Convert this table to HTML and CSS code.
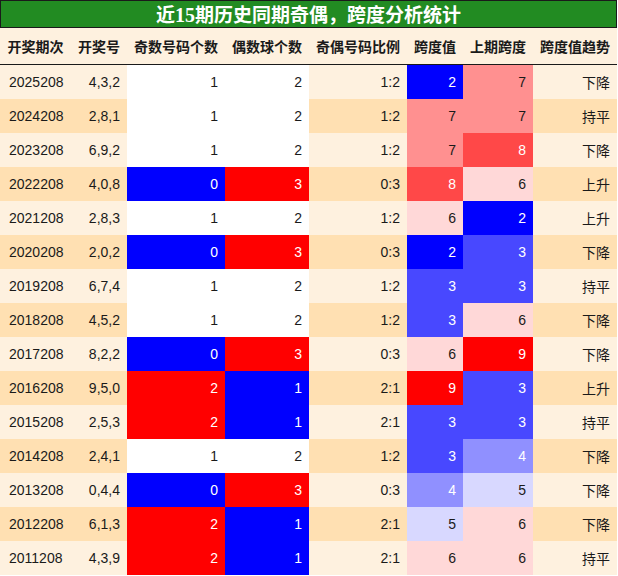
FILE: index.html
```html
<!DOCTYPE html>
<html lang="zh">
<head>
<meta charset="utf-8">
<link rel="stylesheet" href="styles.css">
</head>
<body>
<div class="sheet">
  <div class="title">近<span class="num">15</span>期历史同期奇偶，跨度分析统计</div>
  <div class="row head">
    <div class="c">开奖期次</div><div class="c">开奖号</div><div class="c">奇数号码个数</div><div class="c">偶数球个数</div><div class="c">奇偶号码比例</div><div class="c">跨度值</div><div class="c">上期跨度</div><div class="c">跨度值趋势</div>
  </div>
  <div class="row light"><div class="c">2025208</div><div class="c">4,3,2</div><div class="c w">1</div><div class="c w">2</div><div class="c">1:2</div><div class="c s2">2</div><div class="c s7">7</div><div class="c">下降</div></div>
  <div class="row dark"><div class="c">2024208</div><div class="c">2,8,1</div><div class="c w">1</div><div class="c w">2</div><div class="c">1:2</div><div class="c s7">7</div><div class="c s7">7</div><div class="c">持平</div></div>
  <div class="row light"><div class="c">2023208</div><div class="c">6,9,2</div><div class="c w">1</div><div class="c w">2</div><div class="c">1:2</div><div class="c s7">7</div><div class="c s8">8</div><div class="c">下降</div></div>
  <div class="row dark"><div class="c">2022208</div><div class="c">4,0,8</div><div class="c b">0</div><div class="c r">3</div><div class="c">0:3</div><div class="c s8">8</div><div class="c s6">6</div><div class="c">上升</div></div>
  <div class="row light"><div class="c">2021208</div><div class="c">2,8,3</div><div class="c w">1</div><div class="c w">2</div><div class="c">1:2</div><div class="c s6">6</div><div class="c s2">2</div><div class="c">上升</div></div>
  <div class="row dark"><div class="c">2020208</div><div class="c">2,0,2</div><div class="c b">0</div><div class="c r">3</div><div class="c">0:3</div><div class="c s2">2</div><div class="c s3">3</div><div class="c">下降</div></div>
  <div class="row light"><div class="c">2019208</div><div class="c">6,7,4</div><div class="c w">1</div><div class="c w">2</div><div class="c">1:2</div><div class="c s3">3</div><div class="c s3">3</div><div class="c">持平</div></div>
  <div class="row dark"><div class="c">2018208</div><div class="c">4,5,2</div><div class="c w">1</div><div class="c w">2</div><div class="c">1:2</div><div class="c s3">3</div><div class="c s6">6</div><div class="c">下降</div></div>
  <div class="row light"><div class="c">2017208</div><div class="c">8,2,2</div><div class="c b">0</div><div class="c r">3</div><div class="c">0:3</div><div class="c s6">6</div><div class="c s9">9</div><div class="c">下降</div></div>
  <div class="row dark"><div class="c">2016208</div><div class="c">9,5,0</div><div class="c r">2</div><div class="c b">1</div><div class="c">2:1</div><div class="c s9">9</div><div class="c s3">3</div><div class="c">上升</div></div>
  <div class="row light"><div class="c">2015208</div><div class="c">2,5,3</div><div class="c r">2</div><div class="c b">1</div><div class="c">2:1</div><div class="c s3">3</div><div class="c s3">3</div><div class="c">持平</div></div>
  <div class="row dark"><div class="c">2014208</div><div class="c">2,4,1</div><div class="c w">1</div><div class="c w">2</div><div class="c">1:2</div><div class="c s3">3</div><div class="c s4">4</div><div class="c">下降</div></div>
  <div class="row light"><div class="c">2013208</div><div class="c">0,4,4</div><div class="c b">0</div><div class="c r">3</div><div class="c">0:3</div><div class="c s4">4</div><div class="c s5">5</div><div class="c">下降</div></div>
  <div class="row dark"><div class="c">2012208</div><div class="c">6,1,3</div><div class="c r">2</div><div class="c b">1</div><div class="c">2:1</div><div class="c s5">5</div><div class="c s6">6</div><div class="c">下降</div></div>
  <div class="row light"><div class="c">2011208</div><div class="c">4,3,9</div><div class="c r">2</div><div class="c b">1</div><div class="c">2:1</div><div class="c s6">6</div><div class="c s6">6</div><div class="c">持平</div></div>
</div>
</body>
</html>
```

FILE: styles.css
```css
html, body {
  margin: 0;
  padding: 0;
  background: #ffffff;
}
.sheet {
  width: 617px;
  font-family: "Liberation Sans", "Noto Sans CJK SC", Arial, sans-serif;
  font-size: 14px;
  color: #1a1a1a;
}
.title {
  box-sizing: border-box;
  height: 28px;
  border: 1px solid #1a1a1a;
  background: #228b22;
  color: #ffffff;
  font-family: "Noto Sans CJK SC", sans-serif;
  font-weight: bold;
  font-size: 19px;
  line-height: 25px;
  text-align: center;
}
.title .num {
  font-family: "Liberation Serif", serif;
  font-weight: bold;
  font-size: 20px;
}
.row {
  display: grid;
  grid-template-columns: 71px 56px 98px 84px 98px 56px 70px 84px;
  height: 34px;
}
.row .c {
  display: flex;
  align-items: center;
  justify-content: flex-end;
  padding: 0 7px;
}
.row.head {
  height: 36px;
  border-bottom: 1px solid #1a1a1a;
  background: #fef1df;
  font-family: "Noto Sans CJK SC", sans-serif;
  font-weight: bold;
}
.row.head .c {
  justify-content: center;
  padding: 0;
}
.light { background: #fef1df; }
.dark { background: #ffe0b2; }
.row:not(.head) .c:first-child { justify-content: flex-start; padding-left: 9px; }
.row .c:last-child { font-family: "Noto Sans CJK SC", sans-serif; }
.w { background: #ffffff; }
.b { background: #0000ff; color: #ffffff; }
.r { background: #ff0000; color: #ffffff; }
.s2 { background: #0000ff; color: #ffffff; }
.s3 { background: #4848ff; color: #ffffff; }
.s4 { background: #9090ff; color: #ffffff; }
.s5 { background: #d8d8ff; }
.s6 { background: #ffd8d8; }
.s7 { background: #ff9090; }
.s8 { background: #ff4848; color: #ffffff; }
.s9 { background: #ff0000; color: #ffffff; }
```
